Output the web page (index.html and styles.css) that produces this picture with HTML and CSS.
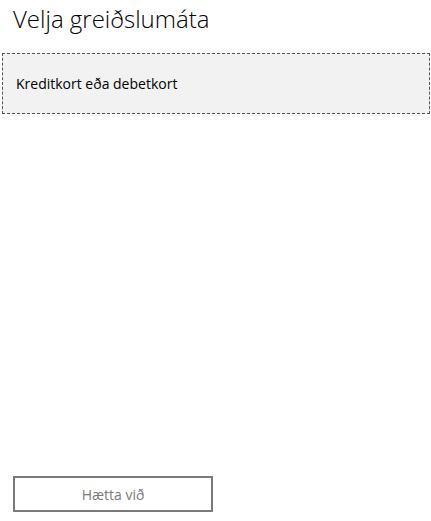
FILE: index.html
```html
<!DOCTYPE html>
<html lang="is">
<head>
<meta charset="utf-8">
<link rel="stylesheet" href="styles.css">
</head>
<body>
<div class="page">
  <h1 class="title">Velja greiðslumáta</h1>
  <div class="option">Kreditkort eða debetkort</div>
  <div class="footer">
    <button class="cancel" type="button">Hætta við</button>
  </div>
</div>
</body>
</html>
```
FILE: styles.css
```css
html, body {
  margin: 0;
  padding: 0;
  background: #fff;
}
.page {
  height: 521px;
  display: flex;
  flex-direction: column;
  font-family: "Open Sans", "Noto Sans", sans-serif;
  color: #000;
}
.title {
  margin: 0;
  padding: 3px 0 0 13px;
  height: 53px;
  box-sizing: border-box;
  font-size: 24px;
  font-weight: 300;
  line-height: 32px;
  color: #000;
}
.option {
  margin-left: 2px;
  margin-right: 1px;
  height: 61px;
  box-sizing: border-box;
  border: 1px dashed #555;
  background: #f2f2f2;
  display: flex;
  align-items: center;
  padding-left: 13px;
  font-size: 14px;
}
.footer {
  margin-top: auto;
  padding: 0 0 9px 13px;
}
.cancel {
  width: 200px;
  height: 36px;
  border: 2px solid #7a7a7a;
  background: #fff;
  color: #7a7a7a;
  font-family: inherit;
  font-size: 14px;
  padding: 0;
}
```
